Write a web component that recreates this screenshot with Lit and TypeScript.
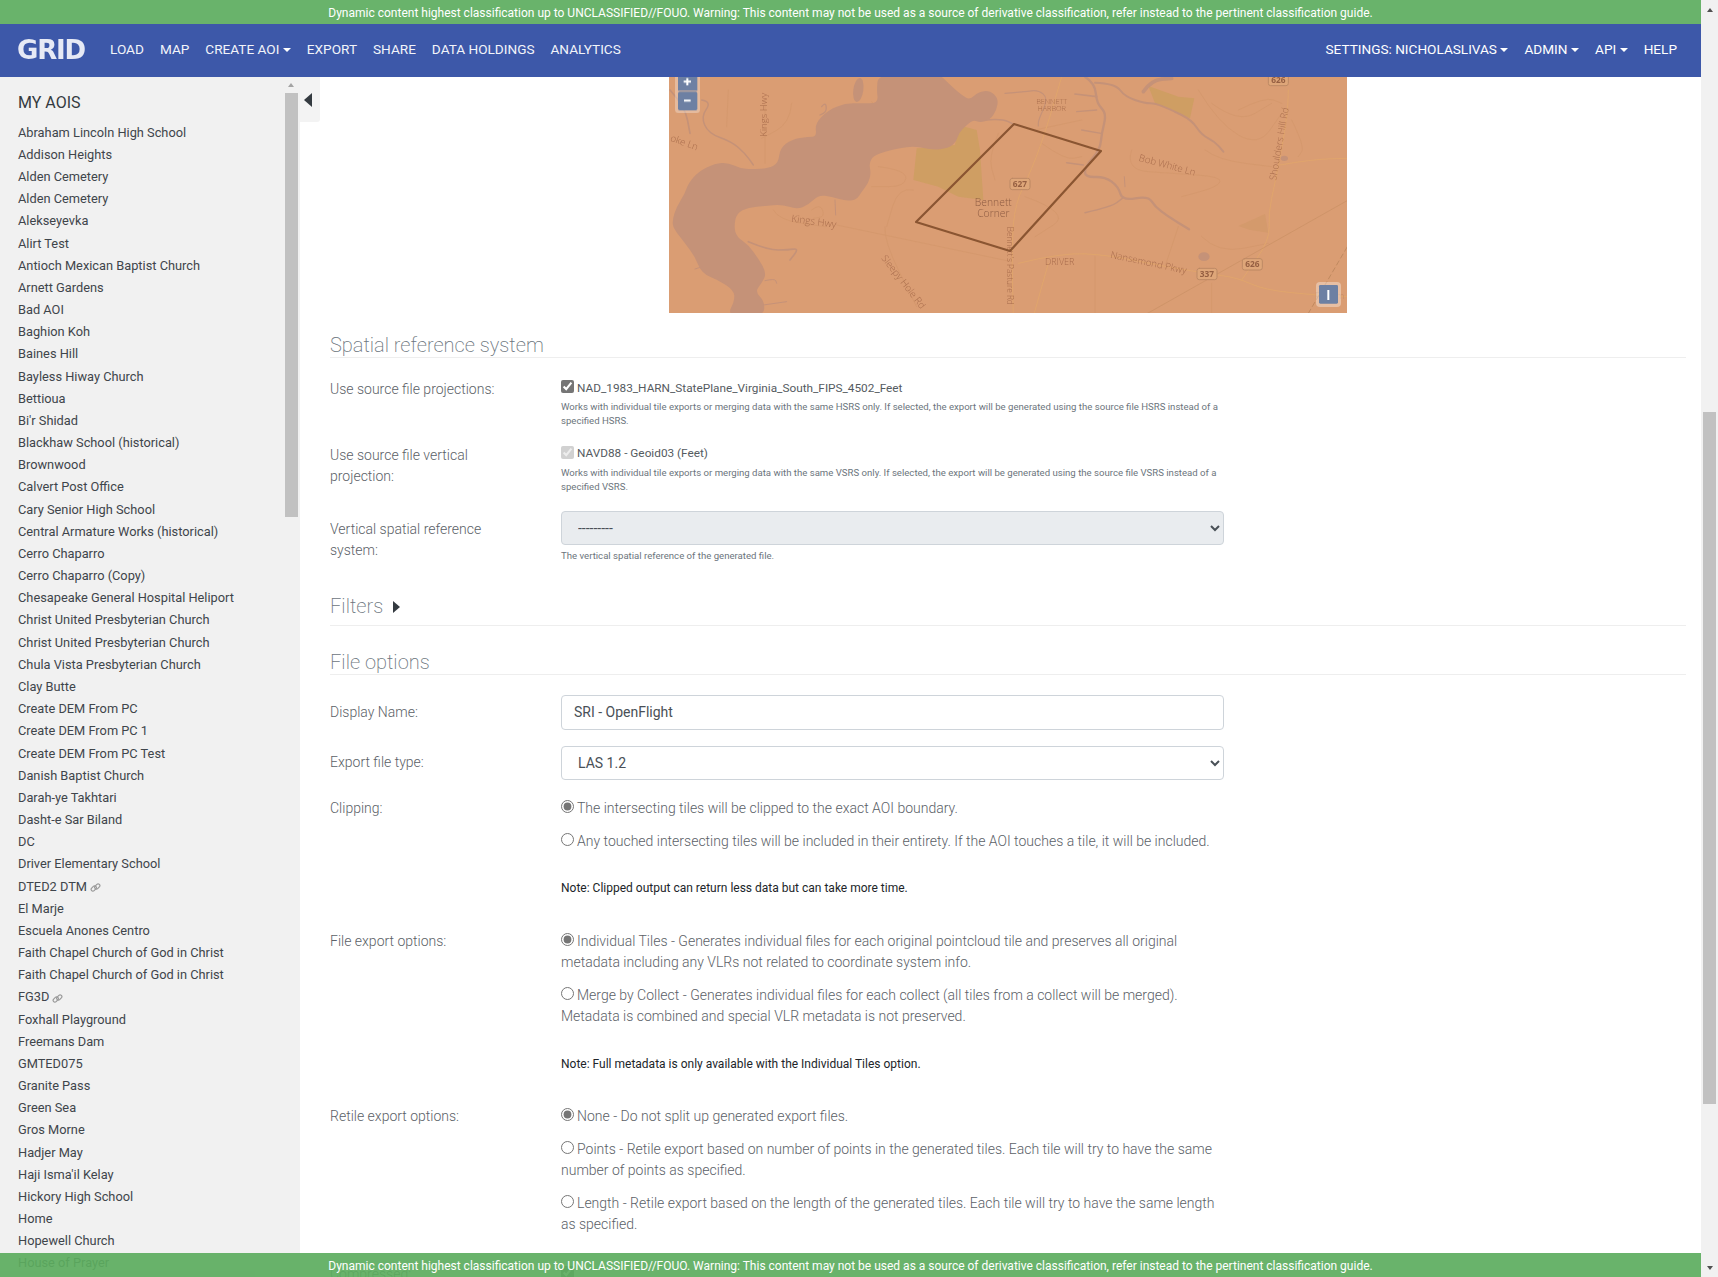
import { LitElement, html, css, svg } from "lit";
import { customElement } from "lit/decorators.js";

const AOIS = ["Abraham Lincoln High School","Addison Heights","Alden Cemetery","Alden Cemetery","Alekseyevka","Alirt Test","Antioch Mexican Baptist Church","Arnett Gardens","Bad AOI","Baghion Koh","Baines Hill","Bayless Hiway Church","Bettioua","Bi'r Shidad","Blackhaw School (historical)","Brownwood","Calvert Post Office","Cary Senior High School","Central Armature Works (historical)","Cerro Chaparro","Cerro Chaparro (Copy)","Chesapeake General Hospital Heliport","Christ United Presbyterian Church","Christ United Presbyterian Church","Chula Vista Presbyterian Church","Clay Butte","Create DEM From PC","Create DEM From PC 1","Create DEM From PC Test","Danish Baptist Church","Darah-ye Takhtari","Dasht-e Sar Biland","DC","Driver Elementary School","DTED2 DTM","El Marje","Escuela Anones Centro","Faith Chapel Church of God in Christ","Faith Chapel Church of God in Christ","FG3D","Foxhall Playground","Freemans Dam","GMTED075","Granite Pass","Green Sea","Gros Morne","Hadjer May","Haji Isma'il Kelay","Hickory High School","Home","Hopewell Church","House of Prayer"];
const LINKED = new Set(["DTED2 DTM", "FG3D"]);
const BANNER = "Dynamic content highest classification up to UNCLASSIFIED//FOUO. Warning: This content may not be used as a source of derivative classification, refer instead to the pertinent classification guide.";

type P = [number, number];
function smooth(p: P[], closed = false): string {
  const mid = (a: P, b: P): P => [(a[0] + b[0]) / 2, (a[1] + b[1]) / 2];
  if (closed) {
    const s = mid(p[p.length - 1], p[0]);
    let d = `M${s[0]} ${s[1]}`;
    p.forEach((q, i) => {
      const m = mid(q, p[(i + 1) % p.length]);
      d += `Q${q[0]} ${q[1]} ${m[0]} ${m[1]}`;
    });
    return d + "Z";
  }
  let d = `M${p[0][0]} ${p[0][1]}`;
  for (let i = 1; i < p.length - 1; i++) {
    const m = mid(p[i], p[i + 1]);
    d += `Q${p[i][0]} ${p[i][1]} ${m[0]} ${m[1]}`;
  }
  const l = p[p.length - 1];
  return d + `L${l[0]} ${l[1]}`;
}

const WATER = "#c59278";
const RIVER: P[] = [[640,10],[820,10],[850,40],[890,75],[915,90],[940,65],[975,62],[1000,85],[995,120],[975,150],[945,158],[925,150],[905,165],[880,190],[875,215],[850,235],[800,240],[750,228],[700,235],[660,245],[625,258],[612,280],[618,310],[610,340],[590,365],[575,390],[540,393],[500,380],[460,375],[430,405],[395,418],[350,403],[300,408],[250,412],[215,430],[207,470],[215,500],[250,525],[280,565],[305,610],[290,640],[270,665],[300,695],[295,740],[185,740],[210,690],[205,660],[160,630],[110,610],[90,560],[60,520],[25,475],[22,450],[35,410],[60,370],[70,340],[100,305],[150,280],[190,278],[225,295],[260,298],[310,295],[340,280],[345,235],[380,208],[430,200],[455,200],[450,160],[490,120],[540,100],[590,100],[640,100],[635,60]];
const CREEKS_L: [P[], number][] = [
  [[[15,60],[60,110],[75,190]], 5],
  [[[110,90],[140,95],[108,140],[130,190],[200,215],[240,250],[265,285]], 4.5],
  [[[470,110],[482,95],[485,125],[465,135]], 4],
  [[[250,515],[310,540],[370,540],[402,535],[375,570]], 5],
  [[[300,632],[330,625],[335,640]], 3],
  [[[295,705],[365,695]], 3],
  [[[90,597],[112,590]], 3],
  [[[510,390],[512,435]], 3],
  [[[960,150],[1010,145],[1050,165]], 4.5],
];
const CREEKS_R: [P[], number][] = [
  [[[240,20],[270,40],[275,100],[305,130],[290,190],[285,240],[240,290],[240,322],[300,320],[340,350],[352,392],[430,378],[450,410],[490,440],[552,478]], 7],
  [[[240,428],[320,410],[352,385]], 4.5],
  [[[358,320],[360,350]], 3],
  [[[185,278],[235,285]], 4.5],
  [[[270,38],[330,40],[360,80],[420,100],[450,100],[500,120],[560,150],[590,195],[630,215],[655,245]], 6],
  [[[415,65],[440,30],[500,25]], 11],
  [[[210,72],[275,80]], 5],
  [[[215,125],[275,120]], 4],
  [[[230,180],[288,190]], 4],
  [[[0,70],[60,65],[100,60],[130,85],[100,150],[100,168]], 3.5],
];
const ROADS_R: P[][] = [
  [[170,20],[130,160],[80,300],[30,400],[20,530],[25,740]],
  [[40,580],[170,548],[310,555],[480,590],[640,615],[700,625],[780,660],[930,675],[1030,680]],
  [[850,60],[850,130],[810,340],[790,430],[795,510],[710,630]],
  [[825,285],[920,268],[1030,265]],
  [[130,580],[85,740]],
];
const FAINT_L: P[][] = [
  [[515,465],[1040,575]],[[660,470],[655,510],[755,710]],[[300,90],[300,280]],[[620,95],[750,230]],
  [[85,335],[205,450]],[[190,60],[185,170]],[[380,100],[375,160],[290,205]],[[325,420],[340,450],[480,470]],
  [[640,290],[725,300],[720,350],[620,350]],[[745,360],[700,350],[665,470]],[[440,420],[465,400],[480,440],[445,445]],
  [[1000,190],[970,260],[990,330]],
];
const FAINT_R: P[][] = [
  [[380,240],[360,300],[500,310],[650,320],[640,350],[530,380]],[[580,60],[640,160],[760,230],[830,130]],
  [[620,100],[700,160],[800,100]],[[600,240],[640,270],[800,290]],[[110,220],[180,270],[230,260]],[[60,380],[200,430],[90,500]],
  [[590,500],[640,550],[790,520]],[[270,560],[270,740]],[[480,590],[520,470]],[[620,640],[620,740]],
  [[90,180],[230,150]],[[700,120],[780,80],[830,100]],[[860,150],[900,230],[880,260]],
];

const label = (t: string, x: number, y: number, size: number, rot = 0, anchor = "start", cls = "lb") =>
  svg`<text class=${cls} x=${x} y=${y} font-size=${size} text-anchor=${anchor} transform=${rot ? `rotate(${rot} ${x} ${y})` : ""}>${t}</text>`;
const shield = (t: string, x: number, y: number) =>
  svg`<rect x=${x - 30} y=${y - 17} width="60" height="34" rx="7" fill="#dea679" stroke="#bd8a64" stroke-width="3"/>
      <text class="sh" x=${x} y=${y + 9} font-size="25" text-anchor="middle">${t}</text>`;

function mapSvg() {
  return svg`<svg class="map" viewBox="0 0 678 236" width="678" height="236" xmlns="http://www.w3.org/2000/svg">
    <defs><filter id="soft" x="0" y="0" width="1" height="1"><feGaussianBlur stdDeviation="0.35"/></filter></defs>
    <rect width="678" height="236" fill="#da9d73"/>
    <g filter="url(#soft)">
      <g transform="translate(-4,-7) scale(.33333)" fill="none" stroke-linecap="round" stroke-linejoin="round">
        ${FAINT_L.map((p) => svg`<path d=${smooth(p)} stroke="#d4986c" stroke-width="2.5"/>`)}
        <polygon points="755,235 870,225 880,165 935,180 945,240 955,390 880,380 820,350 745,330" fill="#cf9e63"/>
        <path d=${smooth(RIVER, true)} fill=${WATER}/>
        <ellipse cx="580" cy="60" rx="15" ry="36" transform="rotate(8 580 60)" fill=${WATER}/>
        ${CREEKS_L.map(([p, w]) => svg`<path d=${smooth(p)} stroke=${WATER} stroke-width=${w}/>`)}
      </g>
      <g transform="translate(336,-7) scale(.33333)" fill="none" stroke-linecap="round" stroke-linejoin="round">
        ${FAINT_R.map((p) => svg`<path d=${smooth(p)} stroke="#d4986c" stroke-width="2.5"/>`)}
        <polygon points="430,48 520,80 568,85 555,145 490,115 450,100" fill="#cf9e63"/>
        <polygon points="700,468 780,432 790,488 735,480" fill="#d49a6c"/>
        ${CREEKS_R.map(([p, w]) => svg`<path d=${smooth(p)} stroke=${WATER} stroke-width=${w}/>`)}
        <ellipse cx="597" cy="560" rx="17" ry="13" fill=${WATER}/>
        <ellipse cx="838" cy="265" rx="11" ry="8" fill=${WATER}/>
        ${ROADS_R.map((p) => svg`<path d=${smooth(p)} stroke="#e0a56c" stroke-width="3"/>`)}
        <path d="M410 740L1030 390" stroke="#c98f64" stroke-width="2"/>
        <path d="M910 730L1030 525" stroke="#bb865c" stroke-width="2.5" stroke-dasharray="14 10"/>
        ${shield("626", 820, 30)}${shield("627", 45, 342)}${shield("337", 606, 612)}${shield("626", 742, 583)}
        ${label("BENNETT", 140, 101, 22, 0, "middle")}${label("HARBOR", 140, 124, 22, 0, "middle")}
        ${label("Bob White Ln", 400, 272, 29, 15)}
        ${label("Shoulders Hill Rd", 813, 332, 29, -80)}
        ${label("DRIVER", 164, 584, 27, 0, "middle")}
        ${label("Nansemond Pkwy", 315, 563, 29, 12)}
        ${label("Portsm", 930, 688, 27, 0, "start", "faint")}
      </g>
      <g transform="translate(-4,-7) scale(.33333)">
        ${label("oke Ln", 14, 212, 29, 20)}
        ${label("Kings Hwy", 306, 200, 29, -90)}
        ${label("Kings Hwy", 378, 455, 30, 8)}
        ${label("Sleepy Hole Rd", 648, 565, 29, 52)}
        ${label("Bennett", 985, 408, 31, 0, "middle", "town")}
        ${label("Corner", 985, 441, 31, 0, "middle", "town")}
        ${label("Bennett's Pasture Rd", 1027, 470, 25, 90)}
      </g>
      <polygon points="247,145 345,47 432,74 341,174" fill="none" stroke="#8a5531" stroke-width="2.2" stroke-linejoin="round"/>
    </g>
    <g transform="translate(-4,-7) scale(.33333)">
      <rect x="30" y="-20" width="75" height="150" rx="12" fill="#ffffff" fill-opacity=".3"/>
      <rect x="39" y="-20" width="58" height="82" fill="#6d80a3"/>
      <rect x="39" y="65" width="58" height="56" rx="5" fill="#6d80a3"/>
      <path d="M67 24v22M56 35h22M57 92h20" stroke="#fff" stroke-width="6"/>
    </g>
    <g transform="translate(336,-7) scale(.33333)">
      <rect x="933" y="636" width="75" height="75" rx="12" fill="#ffffff" fill-opacity=".35"/>
      <rect x="942" y="645" width="57" height="56" rx="4" fill="#6d80a3"/>
      <path d="M970 660v30" stroke="#fff" stroke-width="6"/>
    </g>
  </svg>`;
}

const linkIcon = html`<svg class="lnk" viewBox="0 0 12 12" width="11" height="11" fill="none" stroke="#9a9a9a" stroke-width="1.3"><rect x="0.8" y="5.2" width="6.4" height="3.8" rx="1.9" transform="rotate(-45 4 7)"/><rect x="4.8" y="3" width="6.4" height="3.8" rx="1.9" transform="rotate(-45 8 5)"/></svg>`;

@customElement("app-root")
export class AppRoot extends LitElement {
  static styles = css`
    :host { display: flex; position: relative; width: 100%; height: 100vh; overflow: hidden; background: #fff;
      font-family: Roboto, "Liberation Sans", sans-serif; font-size: 14px; color: #5b6167; }
    * { box-sizing: border-box; }
    .page { flex: 1; min-width: 0; display: flex; flex-direction: column; height: 100%; position: relative; }
    .banner { height: 24px; line-height: 26px; text-align: center; font-size: 12px; color: #fff; background: rgba(92,172,94,.92); flex: none; overflow: hidden; }
    .banner.bottom { position: absolute; left: 0; right: 0; bottom: 0; line-height: 26px; }
    .nav { height: 53px; flex: none; background: #3d58a9; display: flex; align-items: center; padding: 0 16px 3px 17px; color: #fff; font-size: 13.6px; }
    .logo { width: 85px; font: bold 26px "DejaVu Sans", sans-serif; letter-spacing: -1.2px; color: #e6e9f5; filter: blur(.6px); line-height: 53px; margin-top: 3px; }
    .links { display: flex; align-items: center; }
    .links a { padding: 0 8px; white-space: nowrap; color: #fff; }
    .links.left a { color: #f2f4fa; }
    .right { margin-left: auto; }
    .caret { display: inline-block; margin-left: 3.5px; vertical-align: 2.5px; border-top: 4.2px solid #fff; border-left: 4.2px solid transparent; border-right: 4.2px solid transparent; }
    .body { flex: 1; min-height: 0; display: flex; }
    .side { flex: none; width: 300px; background: #f1f1f1; display: flex; overflow: hidden; color: #3f454b; }
    .aois { flex: 1; min-width: 0; padding: 14px 0 0 18px; font-size: 12.8px; }
    .aois h3 { margin: 0 0 6.7px; font-size: 16px; font-weight: 400; line-height: 24px; color: #343a40; }
    .aoi { height: 22.18px; line-height: 22.18px; white-space: nowrap; display: flex; align-items: center; gap: 3px; }
    .lnk { margin-top: 2px; }
    .sb { flex: none; width: 16px; padding-right: 2px; display: flex; flex-direction: column; align-items: stretch; }
    .sb .up { height: 16px; padding-top: 6px; display: flex; justify-content: center; }
    .tri-up { width: 0; height: 0; border-left: 3.5px solid transparent; border-right: 3.5px solid transparent; border-bottom: 4px solid #a3a3a3; }
    .sb .thumb { height: 424px; background: #c1c1c1; margin-left: 1px; }
    .tab { flex: none; width: 20px; height: 45px; background: #f3f3f3; border-radius: 0 0 3px 0; padding: 16px 0 0 4px; }
    .tab i { display: block; width: 0; height: 0; border-top: 7px solid transparent; border-bottom: 7px solid transparent; border-right: 8px solid #343a40; }
    .main { flex: 1; min-width: 0; overflow: hidden; margin-left: 10px; padding-right: 15px; font-weight: 300; }
    .map { display: block; margin: 0 auto; }
    .map text { font-family: "Open Sans", "Noto Sans", sans-serif; }
    .map text.lb { fill: #a86c4c; }
    .map text.town { fill: #8d5b42; }
    .map text.sh { fill: #955f42; font-weight: 700; }
    .map text.faint { fill: #c48b63; }
    h4 { margin: 0; font-size: 20px; font-weight: 200; line-height: 24px; color: #6c757d; border-bottom: 1px solid #eee; height: 25px; }
    h4.spatial { margin-top: 20px; }
    h4.filters { margin-top: 30px; height: 32px; display: flex; }
    h4.fileopts { margin-top: 24px; }
    .filters i { width: 0; height: 0; margin: 7px 0 0 10px; border-top: 6.5px solid transparent; border-bottom: 6.5px solid transparent; border-left: 7px solid #343a40; }
    .row { display: grid; grid-template-columns: 231px 663px; align-items: start; }
    .lab { line-height: 21px; padding-right: 40px; }
    .lab.p1 { padding-top: 1px; }
    .chk { height: 18px; line-height: 18px; padding-top: 1px; font-size: 11.8px; display: flex; align-items: center; color: #555b61; font-weight: 400; }
    .chk input { margin-top: -2px; }
    input[type=checkbox], input[type=radio] { width: 13px; height: 13px; margin-right: 3px; margin-left: 0; margin-bottom: 0; accent-color: #757575; flex: none; }
    .help { font-size: 9.6px; line-height: 14.4px; color: #6c757d; font-weight: 400; }
    .mt4 { margin-top: 4px; }
    .ctl { width: 100%; display: block; font: 300 14px Roboto, sans-serif; color: #495057; border: 1px solid #ced4da; border-radius: 4px; background: #fff; padding: 6px 12px; outline: none; }
    select.ctl { height: 34px; font-weight: 400; }
    select.dis { background: #e9ecef; opacity: 1; }
    input.ctl { height: 35px; font-weight: 400; }
    .opt { line-height: 21px; }
    .opt input { vertical-align: 0; margin-top: 0; }
    .note { font-size: 12px; line-height: 14px; color: #212529; font-weight: 400; }
    .center { align-items: center; }
    .pt { padding-top: 7.5px; }
    .winsb { flex: none; width: 17px; height: 100%; background: #f1f1f1; display: flex; flex-direction: column; align-items: center; }
    .a-up { margin-top: 8px; flex: none; width: 0; height: 0; border-left: 3.5px solid transparent; border-right: 3.5px solid transparent; border-bottom: 4px solid #505050; }
    .w-thumb { margin-top: 400px; flex: none; width: 13px; height: 692px; background: #c1c1c1; }
    .a-down { margin-top: auto; margin-bottom: 7px; flex: none; width: 0; height: 0; border-left: 3.5px solid transparent; border-right: 3.5px solid transparent; border-top: 4px solid #505050; }
  `;

  render() {
    const ss = (px: number) => `margin-top:${px}px`;
    return html`
      <div class="page">
        <div class="banner">${BANNER}</div>
        <nav class="nav">
          <div class="logo">GRID</div>
          <div class="links left">
            <a>LOAD</a><a>MAP</a><a>CREATE AOI<span class="caret"></span></a><a>EXPORT</a><a>SHARE</a><a>DATA HOLDINGS</a><a>ANALYTICS</a>
          </div>
          <div class="links right">
            <a>SETTINGS: NICHOLASLIVAS<span class="caret"></span></a><a>ADMIN<span class="caret"></span></a><a>API<span class="caret"></span></a><a>HELP</a>
          </div>
        </nav>
        <div class="body">
          <aside class="side">
            <div class="aois">
              <h3>MY AOIS</h3>
              ${AOIS.map((a) => html`<div class="aoi">${a}${LINKED.has(a) ? linkIcon : ""}</div>`)}
            </div>
            <div class="sb"><div class="up"><span class="tri-up"></span></div><div class="thumb"></div></div>
          </aside>
          <div class="tab"><i></i></div>
          <main class="main">
            ${mapSvg()}
            <h4 class="spatial">Spatial reference system</h4>
            <div class="row" style=${ss(20)}>
              <div class="lab p1">Use source file projections:</div>
              <div>
                <label class="chk"><input type="checkbox" checked />NAD_1983_HARN_StatePlane_Virginia_South_FIPS_4502_Feet</label>
                <div class="help mt4">Works with individual tile exports or merging data with the same HSRS only. If selected, the export will be generated using the source file HSRS instead of a specified HSRS.</div>
              </div>
            </div>
            <div class="row" style=${ss(15)}>
              <div class="lab p1">Use source file vertical projection:</div>
              <div>
                <label class="chk"><input type="checkbox" checked disabled />NAVD88 - Geoid03 (Feet)</label>
                <div class="help mt4">Works with individual tile exports or merging data with the same VSRS only. If selected, the export will be generated using the source file VSRS instead of a specified VSRS.</div>
              </div>
            </div>
            <div class="row" style=${ss(16.5)}>
              <div class="lab pt">Vertical spatial reference system:</div>
              <div>
                <select class="ctl dis" disabled><option>---------</option></select>
                <div class="help" style=${ss(4)}>The vertical spatial reference of the generated file.</div>
              </div>
            </div>
            <h4 class="filters">Filters<i></i></h4>
            <h4 class="fileopts">File options</h4>
            <div class="row center" style=${ss(20)}>
              <div class="lab">Display Name:</div>
              <input class="ctl" value="SRI - OpenFlight" />
            </div>
            <div class="row center" style=${ss(16)}>
              <div class="lab">Export file type:</div>
              <select class="ctl"><option>LAS 1.2</option></select>
            </div>
            <div class="row" style=${ss(18)}>
              <div class="lab">Clipping:</div>
              <div>
                <div class="opt"><input type="radio" name="c" checked />The intersecting tiles will be clipped to the exact AOI boundary.</div>
                <div class="opt" style=${ss(12)}><input type="radio" name="c" />Any touched intersecting tiles will be included in their entirety. If the AOI touches a tile, it will be included.</div>
                <div class="note" style=${ss(29.5)}>Note: Clipped output can return less data but can take more time.</div>
              </div>
            </div>
            <div class="row" style=${ss(36)}>
              <div class="lab">File export options:</div>
              <div>
                <div class="opt"><input type="radio" name="f" checked />Individual Tiles - Generates individual files for each original pointcloud tile and preserves all original metadata including any VLRs not related to coordinate system info.</div>
                <div class="opt" style=${ss(12)}><input type="radio" name="f" />Merge by Collect - Generates individual files for each collect (all tiles from a collect will be merged). Metadata is combined and special VLR metadata is not preserved.</div>
                <div class="note" style=${ss(29.5)}>Note: Full metadata is only available with the Individual Tiles option.</div>
              </div>
            </div>
            <div class="row" style=${ss(35)}>
              <div class="lab">Retile export options:</div>
              <div>
                <div class="opt"><input type="radio" name="r" checked />None - Do not split up generated export files.</div>
                <div class="opt" style=${ss(12)}><input type="radio" name="r" />Points - Retile export based on number of points in the generated tiles. Each tile will try to have the same number of points as specified.</div>
                <div class="opt" style=${ss(12)}><input type="radio" name="r" />Length - Retile export based on the length of the generated tiles. Each tile will try to have the same length as specified.</div>
              </div>
            </div>
            <div class="row" style=${ss(29)}>
              <div class="lab">Compressed:</div>
              <div class="opt"><input type="checkbox" checked /></div>
            </div>
          </main>
        </div>
        <div class="banner bottom">${BANNER}</div>
      </div>
      <div class="winsb">
        <span class="a-up"></span>
        <div class="w-thumb"></div>
        <span class="a-down"></span>
      </div>
    `;
  }
}
